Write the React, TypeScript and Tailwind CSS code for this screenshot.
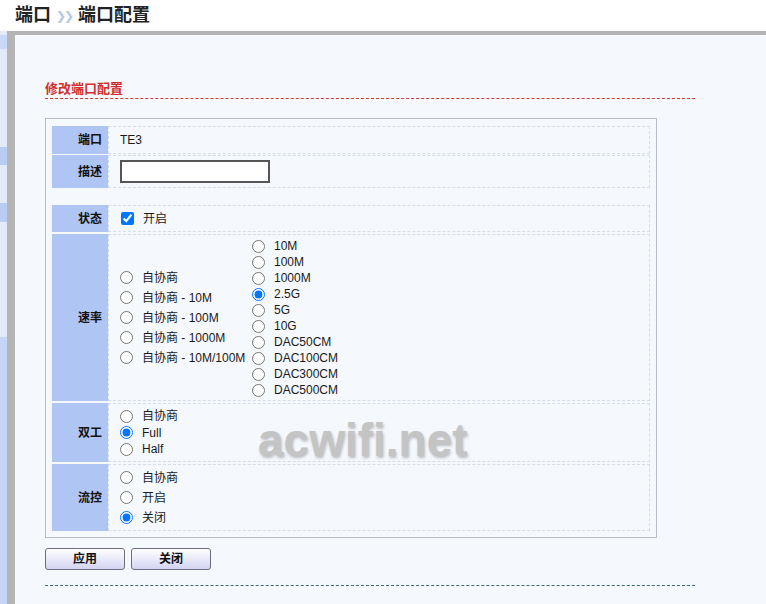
import React from 'react';

const font = { fontFamily: '"Liberation Sans", "Noto Sans CJK SC", sans-serif' };

function Radio({ label, checked }: { label: string; checked?: boolean }) {
  return (
    <label className="flex items-center gap-[9px] leading-none">
      <input type="radio" defaultChecked={checked} className="m-0 h-[13px] w-[13px] accent-[#0075ff]" />
      <span>{label}</span>
    </label>
  );
}

function Row({ label, className, children }: { label: string; className: string; children: React.ReactNode }) {
  return (
    <div className={`flex ${className}`}>
      <div className="flex w-[56px] shrink-0 items-center justify-end bg-[#afc5f4] pr-[6px] font-bold text-[#111]">
        {label}
      </div>
      <div className="flex flex-1 items-center border border-dashed border-[#d6dce8] pl-[11px]">{children}</div>
    </div>
  );
}

export default function App() {
  return (
    <div style={font} className="flex h-[604px] w-[766px] flex-col overflow-hidden bg-white text-[12px] text-[#1a1a1a]">
      <div className="flex h-[31px] shrink-0 items-center pl-[15px] text-[18px] font-bold text-[#222]">
        <span>端口</span>
        <span className="ml-[5px] mr-[6px] text-[12px] font-normal tracking-[-2px] text-[#b4c8e0]">❯❯</span>
        <span>端口配置</span>
      </div>
      <div className="flex flex-1">
        <div className="flex w-[7px] shrink-0 flex-col bg-[#e3ebfb]">
          <div className="mt-[4px] h-[14px] bg-[#c9d8f7]" />
          <div className="mt-[98px] h-[18px] bg-[#b9cdf3]" />
          <div className="mt-[38px] h-[19px] bg-[#b9cdf3]" />
          <div className="mt-[115px] flex-1 bg-[#c4d5f6]" />
        </div>
        <div className="relative flex-1 border-l-8 border-t-4 border-[#b4b4b4] bg-[#f5f8fd] pl-[30px] pt-[46px]">
          <div className="w-[650px] border-b border-dashed border-[#d43a3a] pb-[1px] text-[13px] font-bold leading-[16px] text-[#d12f2f]">
            修改端口配置
          </div>
          <div className="mt-[19px] w-[612px] border border-[#b8bcc4] p-[6px] pt-[7px]">
            <div className="flex flex-col">
              <Row label="端口" className="h-[28px]">
                <span>TE3</span>
              </Row>
              <Row label="描述" className="mt-[1px] h-[33px]">
                <input type="text" className="h-[23px] w-[150px] border-2 border-[#555] bg-white" />
              </Row>
              <Row label="状态" className="mt-[17px] h-[27px]">
                <label className="flex items-center gap-[9px] pl-[1px]">
                  <input type="checkbox" defaultChecked className="m-0 h-[13px] w-[13px] accent-[#0075ff]" />
                  <span>开启</span>
                </label>
              </Row>
              <Row label="速率" className="mt-[2px] h-[167px]">
                <div className="flex w-[132px] flex-col">
                  {['自协商', '自协商 - 10M', '自协商 - 100M', '自协商 - 1000M', '自协商 - 10M/100M'].map((s) => (
                    <div key={s} className="flex h-[20px] items-center">
                      <Radio label={s} />
                    </div>
                  ))}
                </div>
                <div className="flex flex-col self-start pt-[3px]">
                  {['10M', '100M', '1000M', '2.5G', '5G', '10G', 'DAC50CM', 'DAC100CM', 'DAC300CM', 'DAC500CM'].map((s) => (
                    <div key={s} className="flex h-[16px] items-center">
                      <Radio label={s} checked={s === '2.5G'} />
                    </div>
                  ))}
                </div>
              </Row>
              <Row label="双工" className="mt-[2px] h-[59px]">
                <div className="flex flex-col">
                  {['自协商', 'Full', 'Half'].map((s) => (
                    <div key={s} className="flex h-[16.5px] items-center">
                      <Radio label={s} checked={s === 'Full'} />
                    </div>
                  ))}
                </div>
              </Row>
              <Row label="流控" className="mt-[2px] h-[67px]">
                <div className="flex flex-col">
                  {['自协商', '开启', '关闭'].map((s) => (
                    <div key={s} className="flex h-[20px] items-center">
                      <Radio label={s} checked={s === '关闭'} />
                    </div>
                  ))}
                </div>
              </Row>
            </div>
          </div>
          <div className="mt-[10px] flex gap-[6px]">
            {['应用', '关闭'].map((s) => (
              <button
                key={s}
                className="h-[22px] w-[80px] rounded-[3px] border border-[#6e6e7e] bg-gradient-to-b from-white to-[#d4d4f3] text-[12px] font-bold text-[#111]"
              >
                {s}
              </button>
            ))}
          </div>
          <div className="mt-[15px] w-[650px] border-b border-dashed border-[#3a6a80]" />
          <div className="pointer-events-none absolute left-[243px] top-[371px] text-[46px] font-bold text-[#c4c4c4] [text-shadow:1px_2px_3px_rgba(0,0,0,0.25)]">
            acwifi.net
          </div>
        </div>
      </div>
    </div>
  );
}
